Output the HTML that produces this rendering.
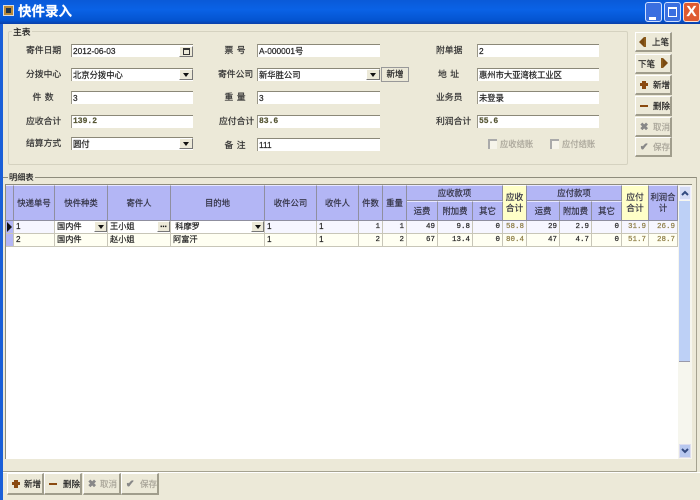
<!DOCTYPE html>
<html><head><meta charset="utf-8"><style>
html,body{margin:0;padding:0}
body{width:700px;height:500px;overflow:hidden;position:relative;background:#ece9d8;font:8.8px/14px "Liberation Sans","WenQuanYi Zen Hei","Noto Sans CJK SC",sans-serif;color:#222;-webkit-text-stroke:.2px}
div,span.a{position:absolute;box-sizing:border-box;white-space:nowrap}
.l{text-align:center;height:14px;color:#333}
.ll{height:14px;color:#333}
.f{background:#fff;height:13px;border-top:1px solid #8b8878;border-left:1px solid #9a9788;padding-left:1px;line-height:12px;font-size:8.3px;color:#222;overflow:hidden}
.m{font-family:"Liberation Mono","WenQuanYi Zen Hei",monospace;font-size:8px;font-weight:bold;color:#553}
.d,.e{background:#ece9d8;width:14px;height:11px;top:0;right:0;border-right:1px solid #777;border-bottom:1px solid #777;border-top:1px solid #fff;border-left:1px solid #fff}
.d:after{content:"";position:absolute;left:3px;top:3px;border:3px solid transparent;border-top:4px solid #111;border-bottom:0}
.b{background:#ece9d8;border-top:1px solid #fff;border-left:1px solid #fff;border-right:2px solid #a09d8c;border-bottom:2px solid #a09d8c;color:#222;line-height:17px;font-size:8.5px}
.g{color:#aaa69a}
.i{font-size:10px;font-weight:bold;color:#888;line-height:14px}
.h{background:#b3b6f5;border-right:1px solid #8f8f9f;border-bottom:1px solid #8f8f9f;border-top:1px solid #e8e8ff;text-align:center;color:#334;font-size:8.4px;line-height:11px;display:flex;align-items:center;justify-content:center;white-space:normal}
.y{background:#ffffc8;border-top-color:#fff;font-size:8.8px}
.c{height:13px;border-right:1px solid #c8c6b8;border-bottom:1px solid #c8c6b8;font-size:8.2px;line-height:12px;padding:0 2px;color:#222;overflow:hidden}
.r1{background:#f6f6ff}.r2{background:#fffff2}
.n{text-align:right;font-family:"Liberation Mono",monospace;font-size:7.5px}
.t{color:#8a7a40}
</style></head><body>
<!-- title bar -->
<div style="left:0;top:0;width:700px;height:24px;background:linear-gradient(#0a5ad8,#0a62e6 40%,#0454d0 85%,#0b3fa8)"></div>
<div style="left:0;top:24px;width:3px;height:476px;background:#1a5fd8"></div>
<div style="left:3px;top:5px;width:11px;height:11px;background:#b88a38;border:1px solid #ddd"><div style="left:2px;top:2px;width:5px;height:5px;background:#234"></div></div>
<div style="left:18px;top:4px;font-size:13.5px;line-height:16px;color:#fff;font-weight:bold">快件录入</div>
<div style="left:645px;top:2px;width:17px;height:20px;background:#3a6fe0;border:1px solid #cfe0ff;border-radius:3px"><div style="left:3px;top:14px;width:7px;height:3px;background:#fff"></div></div>
<div style="left:664px;top:2px;width:17px;height:20px;background:#3a6fe0;border:1px solid #cfe0ff;border-radius:3px"><div style="left:3px;top:4px;width:9px;height:10px;border:1px solid #fff;border-top-width:2px"></div></div>
<div style="left:683px;top:2px;width:17px;height:20px;background:#df5a30;border:1px solid #ffe0d0;border-radius:3px;color:#fff;font:bold 15px/18px 'Liberation Sans';text-align:center">X</div>

<!-- main group -->
<div style="left:8px;top:31px;width:620px;height:134px;border:1px solid #d5d2c0;border-radius:2px"></div>
<div style="left:12px;top:25px;padding:0 1px;background:#ece9d8">主表</div>

<div class="l" style="left:26px;top:43px;width:34px">寄件日期</div>
<div class="l" style="left:26px;top:67px;width:34px">分拨中心</div>
<div class="l" style="left:26px;top:90px;width:34px;word-spacing:1px">件 数</div>
<div class="l" style="left:26px;top:114px;width:34px">应收合计</div>
<div class="l" style="left:26px;top:136px;width:34px">结算方式</div>

<div class="f" style="left:71px;top:44px;width:122px">2012-06-03<div class="e" style="top:1px"><div style="left:3px;top:1px;width:7px;height:7px;border:1px solid #333;border-top-width:2px"></div></div></div>
<div class="f" style="left:71px;top:68px;width:122px">北京分拨中心<div class="d"></div></div>
<div class="f" style="left:71px;top:91px;width:122px">3</div>
<div class="f m" style="left:71px;top:115px;width:122px">139.2</div>
<div class="f" style="left:71px;top:137px;width:122px">圆付<div class="d"></div></div>

<div class="l" style="left:218px;top:43px;width:34px;word-spacing:1px">票 号</div>
<div class="l" style="left:218px;top:67px;width:34px">寄件公司</div>
<div class="l" style="left:218px;top:90px;width:34px;word-spacing:1px">重 量</div>
<div class="l" style="left:219px;top:114px;width:34px">应付合计</div>
<div class="l" style="left:218px;top:138px;width:34px;word-spacing:1px">备 注</div>

<div class="f" style="left:257px;top:44px;width:123px">A-000001号</div>
<div class="f" style="left:257px;top:68px;width:123px">新华胜公司<div class="d"></div></div>
<div class="f" style="left:257px;top:91px;width:123px">3</div>
<div class="f m" style="left:257px;top:115px;width:123px">83.6</div>
<div class="f" style="left:257px;top:138px;width:123px">111</div>
<div class="b" style="left:381px;top:67px;width:28px;height:15px;border:1px solid #999;text-align:center;line-height:13px">新增</div>

<div class="ll" style="left:436px;top:43px">附单据</div>
<div class="ll" style="left:438px;top:67px;word-spacing:1px">地 址</div>
<div class="ll" style="left:436px;top:90px">业务员</div>
<div class="ll" style="left:436px;top:114px">利润合计</div>

<div class="f" style="left:477px;top:44px;width:122px">2</div>
<div class="f" style="left:477px;top:68px;width:122px">惠州市大亚湾核工业区</div>
<div class="f" style="left:477px;top:91px;width:122px">未登录</div>
<div class="f m" style="left:477px;top:115px;width:122px">55.6</div>

<div style="left:488px;top:139px;width:9px;height:10px;border-top:2px solid #aaa;border-left:2px solid #aaa;background:#f6f4ea"></div>
<div class="g" style="left:500px;top:137px;font-size:8.3px">应收结账</div>
<div style="left:550px;top:139px;width:9px;height:10px;border-top:2px solid #aaa;border-left:2px solid #aaa;background:#f6f4ea"></div>
<div class="g" style="left:562px;top:137px;font-size:8.3px">应付结账</div>

<!-- right buttons -->
<div class="b" style="left:635px;top:32px;width:37px;height:20px"><div style="left:8px;top:4px;width:2px;height:10px;background:#8a5a1a"></div><div style="left:3px;top:4px;border:5px solid transparent;border-right:5px solid #7a4a10;border-left:0"></div><div style="left:16px;top:1px">上笔</div></div>
<div class="b" style="left:635px;top:54px;width:37px;height:20px"><div style="left:2px;top:1px">下笔</div><div style="left:25px;top:3px;width:2px;height:10px;background:#8a5a1a"></div><div style="left:27px;top:3px;border:5px solid transparent;border-left:5px solid #7a4a10;border-right:0"></div></div>
<div class="b" style="left:635px;top:75px;width:37px;height:20px"><div style="left:4px;top:7px;width:8px;height:3px;background:#8a4a10"></div><div style="left:6px;top:5px;width:4px;height:8px;background:#8a4a10"></div><div style="left:17px;top:1px">新增</div></div>
<div class="b" style="left:635px;top:96px;width:37px;height:20px"><div style="left:4px;top:8px;width:8px;height:2px;background:#8a4a10"></div><div style="left:17px;top:1px">删除</div></div>
<div class="b g" style="left:635px;top:117px;width:37px;height:20px"><div class="i" style="left:4px;top:3px">✖</div><div style="left:17px;top:1px">取消</div></div>
<div class="b g" style="left:635px;top:137px;width:37px;height:20px"><div class="i" style="left:4px;top:3px">✔</div><div style="left:17px;top:1px">保存</div></div>

<!-- detail group -->
<div style="left:3px;top:177px;width:694px;height:295px;border-top:1px solid #8e8c7c;border-right:1px solid #a5a290;border-bottom:1px solid #a5a290"></div>
<div style="left:8px;top:171px;padding:0 1px;background:#ece9d8;font-size:8.2px">明细表</div>

<!-- grid -->
<div style="left:5px;top:184px;width:687px;height:275px;background:#fff;border-left:1px solid #8e8c7c;border-top:1px solid #8e8c7c"></div>
<div class="h" style="left:6px;top:185px;width:8px;height:36px"></div>
<div class="h" style="left:14px;top:185px;width:41px;height:36px">快递单号</div>
<div class="h" style="left:55px;top:185px;width:53px;height:36px">快件种类</div>
<div class="h" style="left:108px;top:185px;width:63px;height:36px">寄件人</div>
<div class="h" style="left:171px;top:185px;width:94px;height:36px">目的地</div>
<div class="h" style="left:265px;top:185px;width:52px;height:36px">收件公司</div>
<div class="h" style="left:317px;top:185px;width:42px;height:36px">收件人</div>
<div class="h" style="left:359px;top:185px;width:24px;height:36px">件数</div>
<div class="h" style="left:383px;top:185px;width:24px;height:36px">重量</div>
<div class="h" style="left:407px;top:185px;width:96px;height:16px">应收款项</div>
<div class="h" style="left:407px;top:201px;width:31px;height:20px">运费</div>
<div class="h" style="left:438px;top:201px;width:35px;height:20px">附加费</div>
<div class="h" style="left:473px;top:201px;width:30px;height:20px">其它</div>
<div class="h y" style="left:503px;top:185px;width:24px;height:36px;padding:0 1px">应收合计</div>
<div class="h" style="left:527px;top:185px;width:95px;height:16px">应付款项</div>
<div class="h" style="left:527px;top:201px;width:33px;height:20px">运费</div>
<div class="h" style="left:560px;top:201px;width:32px;height:20px">附加费</div>
<div class="h" style="left:592px;top:201px;width:30px;height:20px">其它</div>
<div class="h y" style="left:622px;top:185px;width:27px;height:36px;padding:0 2px">应付合计</div>
<div class="h" style="left:649px;top:185px;width:29px;height:36px;padding:0 1px">利润合计</div>

<!-- row 1 -->
<div class="c" style="left:6px;top:221px;width:8px;background:#b3b6f5;padding:0"><div style="left:1px;top:1px;border:5px solid transparent;border-left:5px solid #111;border-right:0"></div></div>
<div class="c r1" style="left:14px;top:221px;width:41px">1</div>
<div class="c r1" style="left:55px;top:221px;width:53px;background:#fff">国内件<div class="d" style="width:13px"></div></div>
<div class="c r1" style="left:108px;top:221px;width:63px;background:#fff">王小姐<div class="e" style="width:13px;font:bold 8px/6px 'Liberation Sans';text-align:center;color:#111">...</div></div>
<div class="c r1" style="left:171px;top:221px;width:94px;background:#fff">&nbsp;科摩罗<div class="d" style="width:13px"></div></div>
<div class="c r1" style="left:265px;top:221px;width:52px">1</div>
<div class="c r1" style="left:317px;top:221px;width:42px">1</div>
<div class="c r1 n" style="left:359px;top:221px;width:24px">1</div>
<div class="c r1 n" style="left:383px;top:221px;width:24px">1</div>
<div class="c r1 n" style="left:407px;top:221px;width:31px">49</div>
<div class="c r1 n" style="left:438px;top:221px;width:35px">9.8</div>
<div class="c r1 n" style="left:473px;top:221px;width:30px">0</div>
<div class="c r1 n t" style="left:503px;top:221px;width:24px">58.8</div>
<div class="c r1 n" style="left:527px;top:221px;width:33px">29</div>
<div class="c r1 n" style="left:560px;top:221px;width:32px">2.9</div>
<div class="c r1 n" style="left:592px;top:221px;width:30px">0</div>
<div class="c r1 n t" style="left:622px;top:221px;width:27px">31.9</div>
<div class="c r1 n t" style="left:649px;top:221px;width:29px">26.9</div>
<!-- row 2 -->
<div class="c" style="left:6px;top:234px;width:8px;background:#b3b6f5"></div>
<div class="c r2" style="left:14px;top:234px;width:41px">2</div>
<div class="c r2" style="left:55px;top:234px;width:53px">国内件</div>
<div class="c r2" style="left:108px;top:234px;width:63px">赵小姐</div>
<div class="c r2" style="left:171px;top:234px;width:94px">阿富汗</div>
<div class="c r2" style="left:265px;top:234px;width:52px">1</div>
<div class="c r2" style="left:317px;top:234px;width:42px">1</div>
<div class="c r2 n" style="left:359px;top:234px;width:24px">2</div>
<div class="c r2 n" style="left:383px;top:234px;width:24px">2</div>
<div class="c r2 n" style="left:407px;top:234px;width:31px">67</div>
<div class="c r2 n" style="left:438px;top:234px;width:35px">13.4</div>
<div class="c r2 n" style="left:473px;top:234px;width:30px">0</div>
<div class="c r2 n t" style="left:503px;top:234px;width:24px">80.4</div>
<div class="c r2 n" style="left:527px;top:234px;width:33px">47</div>
<div class="c r2 n" style="left:560px;top:234px;width:32px">4.7</div>
<div class="c r2 n" style="left:592px;top:234px;width:30px">0</div>
<div class="c r2 n t" style="left:622px;top:234px;width:27px">51.7</div>
<div class="c r2 n t" style="left:649px;top:234px;width:29px">28.7</div>

<!-- scrollbar -->
<div style="left:678px;top:185px;width:14px;height:274px;background:#f6f6ee"></div>
<div style="left:679px;top:186px;width:12px;height:14px;background:#d5dcf5;border:1px solid #eef"><svg style="position:absolute;left:1px;top:3px" width="8" height="6"><path d="M1 5L4 2L7 5" fill="none" stroke="#334a80" stroke-width="2"/></svg></div>
<div style="left:679px;top:201px;width:11px;height:161px;background:#bdd0f6;border-bottom:1px solid #99a"></div>
<div style="left:679px;top:444px;width:12px;height:14px;background:#b8c8ef;border:1px solid #dde"><svg style="position:absolute;left:1px;top:3px" width="8" height="6"><path d="M1 1L4 4L7 1" fill="none" stroke="#334a80" stroke-width="2"/></svg></div>

<!-- bottom buttons -->
<div style="left:3px;top:472px;width:697px;height:1px;background:#fff"></div>
<div class="b" style="left:7px;top:473px;width:37px;height:22px"><div style="left:4px;top:8px;width:8px;height:3px;background:#8a4a10"></div><div style="left:6px;top:6px;width:4px;height:8px;background:#8a4a10"></div><div style="left:16px;top:2px">新增</div></div>
<div class="b" style="left:44px;top:473px;width:38px;height:22px"><div style="left:4px;top:9px;width:8px;height:2px;background:#8a4a10"></div><div style="left:18px;top:2px">删除</div></div>
<div class="b g" style="left:83px;top:473px;width:38px;height:22px"><div class="i" style="left:4px;top:4px">✖</div><div style="left:16px;top:2px">取消</div></div>
<div class="b g" style="left:121px;top:473px;width:38px;height:22px"><div class="i" style="left:4px;top:4px">✔</div><div style="left:18px;top:2px">保存</div></div>
</body></html>
